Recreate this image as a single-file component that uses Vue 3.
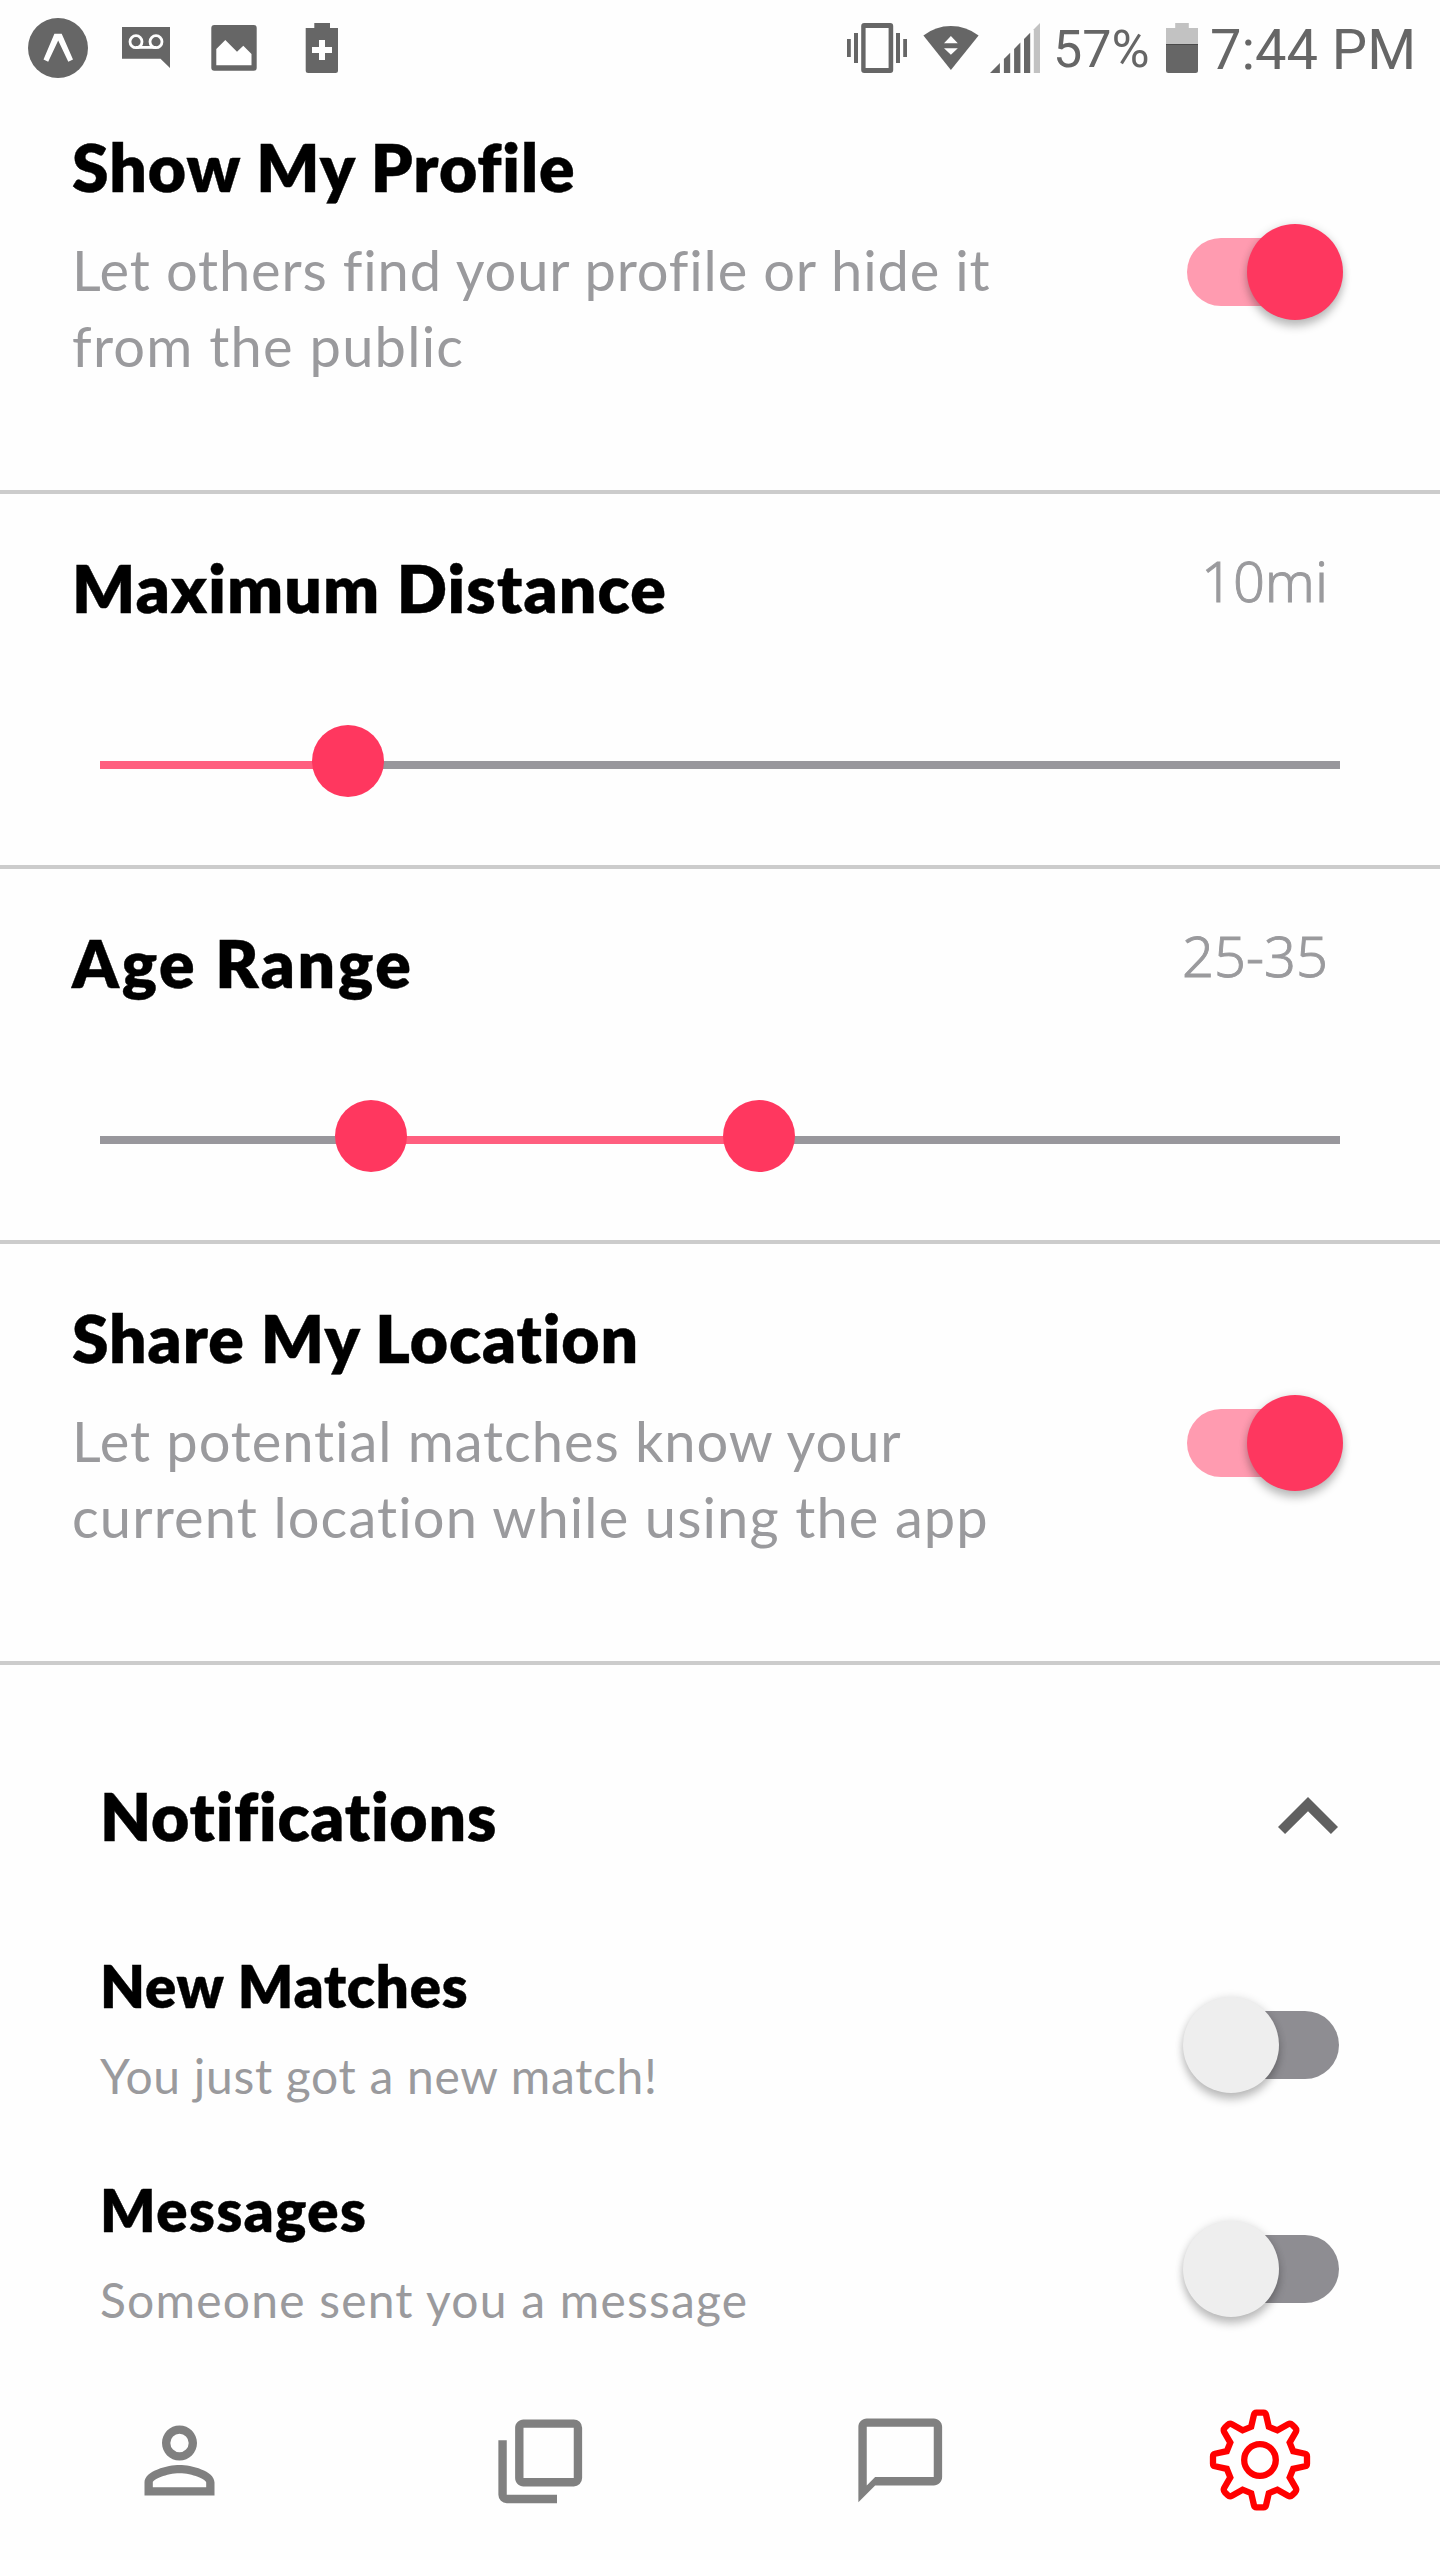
<script setup>
import { reactive } from 'vue'

const profile = reactive({
  title: 'Show My Profile',
  gap: 0.95,
  lines: [
    { text: 'Let others find your profile or hide it', gap: 0.85 },
    { text: 'from the public', gap: 1.25 },
  ],
  on: true,
})

const location = reactive({
  title: 'Share My Location',
  gap: 0.9,
  lines: [
    { text: 'Let potential matches know your', gap: 0.95 },
    { text: 'current location while using the app', gap: 1.12 },
  ],
  on: true,
})

const sliders = [
  { title: 'Maximum Distance', gap: 1.15, value: '10mi', from: 0, to: 20, thumbs: [20] },
  { title: 'Age Range', gap: 2.7, value: '25-35', from: 21.85, to: 53.15, thumbs: [21.85, 53.15] },
]

const notifications = reactive([
  { title: 'New Matches', gap: 0.8, text: 'You just got a new match!', textGap: 0.7, on: false },
  { title: 'Messages', gap: 1.5, text: 'Someone sent you a message', textGap: 1.2, on: false },
])

const px = (n) => ({ letterSpacing: n + 'px' })
</script>

<template>
  <div class="app">
    <header class="status">
      <svg class="expo" width="60" height="84" viewBox="28 0 60 84">
        <circle cx="58" cy="48" r="30" fill="#666" />
        <path d="M54.4 33.7h7.3L73 59.4l-4.7 2.3L58.2 40.6 48.2 61.7l-4.7-2.3z" fill="#fff" />
      </svg>
      <svg class="voicemail" width="48" height="84" viewBox="122 0 48 84">
        <path d="M122 27h48v41l-9.5-9.2H122z" fill="#666" />
        <g fill="none" stroke="#fff" stroke-width="2.8">
          <circle cx="136" cy="41.7" r="6" />
          <circle cx="156" cy="41.7" r="6" />
          <path d="M136 47.4h20" />
        </g>
      </svg>
      <svg class="picture" width="46" height="84" viewBox="211 0 46 84">
        <rect x="211.3" y="25" width="45.4" height="45.7" rx="3" fill="#666" />
        <path d="M216.3 49l9-9L237 51.7l6.3-6 8.2 8.3v11.3h-35.2z" fill="#fff" />
      </svg>
      <svg class="saver" width="34" height="84" viewBox="305 0 34 84">
        <path d="M314.3 23H330v5h8v42.5a2.5 2.5 0 0 1-2.5 2.5h-27.3a2.5 2.5 0 0 1-2.5-2.5V28h8.6z" fill="#666" />
        <path d="M319 40h6v7h7v6h-7v7h-6v-7h-7v-6h7z" fill="#fff" />
      </svg>
      <span class="spacer"></span>
      <svg class="vibrate" width="62" height="84" viewBox="846 0 62 84">
        <path
          fill="#666"
          fill-rule="evenodd"
          d="M864.2 23h26a3 3 0 0 1 3 3v44a3 3 0 0 1-3 3h-26a3 3 0 0 1-3-3V26a3 3 0 0 1 3-3zm1.4 5v40h23V28z"
        />
        <path fill="#666" d="M847 39h3.8v18H847zM854 33h4v30h-4zM896 33h4v30h-4zM903.2 39h3.8v18h-3.8z" />
      </svg>
      <svg class="wifi" width="57" height="84" viewBox="922 0 57 84">
        <path d="M950.9 70L923.4 35.5Q935.5 26 950.9 26t27.7 9.5z" fill="#666" />
        <path d="M950.9 36l6.9 7.3h-13.8zM950.9 54.7l6.9-6.4h-13.8z" fill="#fff" />
      </svg>
      <svg class="signal" width="50" height="84" viewBox="990 0 50 84">
        <g fill="#666">
          <path d="M990 73l9.9-9.9V73z" />
          <path d="M1003.9 73V59.1l6.3-6.3V73z" />
          <path d="M1014.1 73V48.9l6.3-6.3V73z" />
          <path d="M1024 73V39l6.2-6.2V73z" />
        </g>
        <path d="M1033.8 73V29.2l6.2-6.2v50z" fill="#c2c2c2" />
      </svg>
      <span class="percent">57%</span>
      <svg class="battery" width="33" height="84" viewBox="1166 0 33 84">
        <path d="M1175.2 23h13.6v5h9.2v17h-32V28h9.2z" fill="#c2c2c2" />
        <path d="M1166 44h32v26.5a2.5 2.5 0 0 1-2.5 2.5h-27a2.5 2.5 0 0 1-2.5-2.5z" fill="#666" />
        <path d="M1166 44h32v1h-32z" fill="#4a4a4a" />
      </svg>
      <span class="clock">7:44 PM</span>
    </header>

    <main class="content">
      <section class="panel first">
        <div class="copy">
          <h2 :style="px(profile.gap)">{{ profile.title }}</h2>
          <p v-for="l in profile.lines" :key="l.text" :style="px(l.gap)">{{ l.text }}</p>
        </div>
        <div class="toggle" :class="{ on: profile.on }" @click="profile.on = !profile.on"><i></i></div>
      </section>

      <section v-for="s in sliders" :key="s.title" class="range">
        <div class="range-head">
          <h2 :style="px(s.gap)">{{ s.title }}</h2>
          <span class="value">{{ s.value }}</span>
        </div>
        <div class="track">
          <div class="fill" :style="{ marginLeft: s.from + '%', width: s.to - s.from + '%' }"></div>
          <div v-for="t in s.thumbs" :key="t" class="thumb" :style="{ left: t + '%' }"></div>
        </div>
      </section>

      <section class="panel">
        <div class="copy">
          <h2 :style="px(location.gap)">{{ location.title }}</h2>
          <p v-for="l in location.lines" :key="l.text" :style="px(l.gap)">{{ l.text }}</p>
        </div>
        <div class="toggle" :class="{ on: location.on }" @click="location.on = !location.on"><i></i></div>
      </section>

      <section class="notifications">
        <div class="group-head">
          <h2>Notifications</h2>
          <svg width="120" height="120" viewBox="0 0 24 24">
            <path d="M12 8l-6 6 1.41 1.41L12 10.83l4.59 4.58L18 14z" fill="#606060" />
          </svg>
        </div>
        <div v-for="n in notifications" :key="n.title" class="item">
          <div>
            <h3 :style="px(n.gap)">{{ n.title }}</h3>
            <p :style="px(n.textGap)">{{ n.text }}</p>
          </div>
          <div class="toggle" :class="{ on: n.on }" @click="n.on = !n.on"><i></i></div>
        </div>
      </section>
    </main>

    <nav class="tabs">
      <a class="person">
        <svg width="105" height="105" viewBox="0 0 24 24" fill="gray">
          <path d="M12 5.9a2.1 2.1 0 1 1 0 4.2 2.1 2.1 0 0 1 0-4.2m0 9c2.97 0 6.1 1.46 6.1 2.1v1.1H5.9V17c0-.64 3.13-2.1 6.1-2.1M12 4C9.79 4 8 5.79 8 8s1.79 4 4 4 4-1.79 4-4-1.79-4-4-4zm0 9c-2.67 0-8 1.34-8 4v3h16v-3c0-2.66-5.33-4-8-4z" />
        </svg>
      </a>
      <a class="cards">
        <svg width="100.5" height="100.5" viewBox="0 0 24 24" fill="gray">
          <path d="M20 16V4H8v12h12m2 0a2 2 0 0 1-2 2H8c-1.11 0-2-.9-2-2V4c0-1.11.89-2 2-2h12a2 2 0 0 1 2 2v12m-6 4v2H4a2 2 0 0 1-2-2V7h2v13h12z" />
        </svg>
      </a>
      <a>
        <svg width="100.5" height="100.5" viewBox="0 0 24 24" fill="gray">
          <path d="M20 2H4c-1.1 0-2 .9-2 2v18l4-4h14c1.1 0 2-.9 2-2V4c0-1.1-.9-2-2-2zm0 14H6l-2 2V4h16v12z" />
        </svg>
      </a>
      <a>
        <svg width="104" height="104" viewBox="-52 -52 104 104" fill="none" stroke="#f00" stroke-width="6.3">
          <circle r="15.8" />
          <path
            d="M3.5 -47.3Q5.6 -47.3 6.1 -45L8.8 -33.2L17.4 -29.7L28 -35.8Q30.4 -37 32.4 -35L35 -32.4Q37 -30.4 35.8 -28L29.7 -17.4L33.2 -8.8L45 -6.3Q47 -5.8 47 -3.7V3.7Q47 5.8 45 6.3L33.2 8.8L29.7 17.4L35.8 28Q37 30.4 35 32.4L32.4 35Q30.4 37 28 35.8L17.4 29.7L8.8 33.2L6.1 45Q5.6 47.3 3.5 47.3H-3.5Q-5.6 47.3 -6.1 45L-8.8 33.2L-17.4 29.7L-28 35.8Q-30.4 37 -32.4 35L-35 32.4Q-37 30.4 -35.8 28L-29.7 17.4L-33.2 8.8L-45 6.3Q-47 5.8 -47 3.7V-3.7Q-47 -5.8 -45 -6.3L-33.2 -8.8L-29.7 -17.4L-35.8 -28Q-37 -30.4 -35 -32.4L-32.4 -35Q-30.4 -37 -28 -35.8L-17.4 -29.7L-8.8 -33.2L-6.1 -45Q-5.6 -47.3 -3.5 -47.3Z"
          />
        </svg>
      </a>
    </nav>
  </div>
</template>

<style>
body {
  background: #fefefe;
}
</style>

<style scoped>
.app {
  display: flex;
  flex-direction: column;
  width: 1440px;
  height: 2560px;
  overflow: hidden;
  background: #fefefe;
  font-family: Lato, 'Noto Sans', sans-serif;
}

.app * {
  box-sizing: border-box;
}

svg {
  display: block;
  flex: none;
}

h2,
h3,
p {
  margin: 0;
  white-space: nowrap;
  font-variant-ligatures: none;
}

h2,
h3 {
  font-weight: 800;
  color: #000;
  -webkit-text-stroke: 0.4px #000;
}

h2 {
  font-size: 66px;
  line-height: 76px;
}

.status {
  display: flex;
  flex: none;
  height: 84px;
  padding: 0 20px 0 28px;
  font-family: Roboto, sans-serif;
  color: #666;
}

.voicemail {
  margin-left: 34px;
}

.picture {
  margin-left: 41px;
}

.saver {
  margin-left: 48px;
}

.spacer {
  width: 507px;
}

.wifi {
  margin-left: 14px;
}

.signal {
  margin-left: 11px;
}

.percent {
  width: 113px;
  margin-left: 13px;
  font-size: 52px;
  line-height: 100px;
}

.clock {
  margin-left: 11px;
  font-size: 56px;
  line-height: 101px;
  white-space: nowrap;
}

.status > * {
  flex: none;
}

.content {
  flex: 1;
  min-height: 0;
}

.panel {
  display: flex;
  justify-content: space-between;
  height: 421px;
  padding: 56px 101px 0 72px;
  border-bottom: 4px solid #ccc;
}

.panel.first {
  height: 410px;
  padding-top: 45px;
}

.copy h2 {
  margin-bottom: 27px;
}

.copy p {
  font-size: 56px;
  line-height: 76px;
  color: #9a9a9d;
}

.toggle {
  position: relative;
  flex: none;
  width: 152.5px;
  height: 68px;
  margin-top: 109px;
  border-radius: 34px;
  background: #8e8d92;
}

.toggle i {
  position: absolute;
  top: -14px;
  left: -4px;
  width: 96px;
  height: 96px;
  border-radius: 50%;
  background: #eee;
  box-shadow: 0 7px 9px rgba(0, 0, 0, 0.22), 0 0 8px rgba(0, 0, 0, 0.12);
}

.toggle.on {
  background: #ff9bb0;
}

.toggle.on i {
  left: 60px;
  background: #fe375f;
}

.range {
  height: 375px;
  padding: 48px 100px 0;
  border-bottom: 4px solid #ccc;
}

.range-head {
  display: flex;
  justify-content: space-between;
  height: 84px;
  margin: 0 12px 0 -28px;
}

.range-head h2 {
  margin-top: 8px;
}

.value {
  font: 300 56px/76px 'Noto Sans', sans-serif;
  color: #9a9a9d;
  -webkit-text-stroke: 0.9px #9a9a9d;
}

.track {
  position: relative;
  height: 8px;
  margin-top: 135px;
  background: #98979c;
}

.fill {
  height: 8px;
  background: #ff5f7f;
}

.thumb {
  position: absolute;
  top: -36px;
  width: 72px;
  height: 72px;
  margin-left: -36px;
  border-radius: 50%;
  background: #ff375f;
}

.notifications {
  padding: 92px 101px 0 100px;
}

.group-head {
  display: flex;
  align-items: center;
  justify-content: space-between;
  height: 120px;
  margin: 0 -29px 75px 0;
}

.group-head h2 {
  margin-bottom: 2px;
  letter-spacing: 0.8px;
}

.item {
  display: flex;
  justify-content: space-between;
  height: 224px;
}

.item h3 {
  margin-bottom: 24px;
  font-size: 58px;
  line-height: 68px;
}

.item p {
  font-size: 48px;
  line-height: 64px;
  color: #9a9a9d;
}

.item .toggle {
  margin-top: 59px;
}

.tabs {
  display: grid;
  grid-template-columns: repeat(4, 1fr);
  flex: none;
  height: 200px;
}

.tabs a {
  display: flex;
  align-items: center;
  justify-content: center;
}

.tabs .person {
  padding-right: 1px;
}

.tabs .cards {
  padding-top: 2px;
}
</style>
